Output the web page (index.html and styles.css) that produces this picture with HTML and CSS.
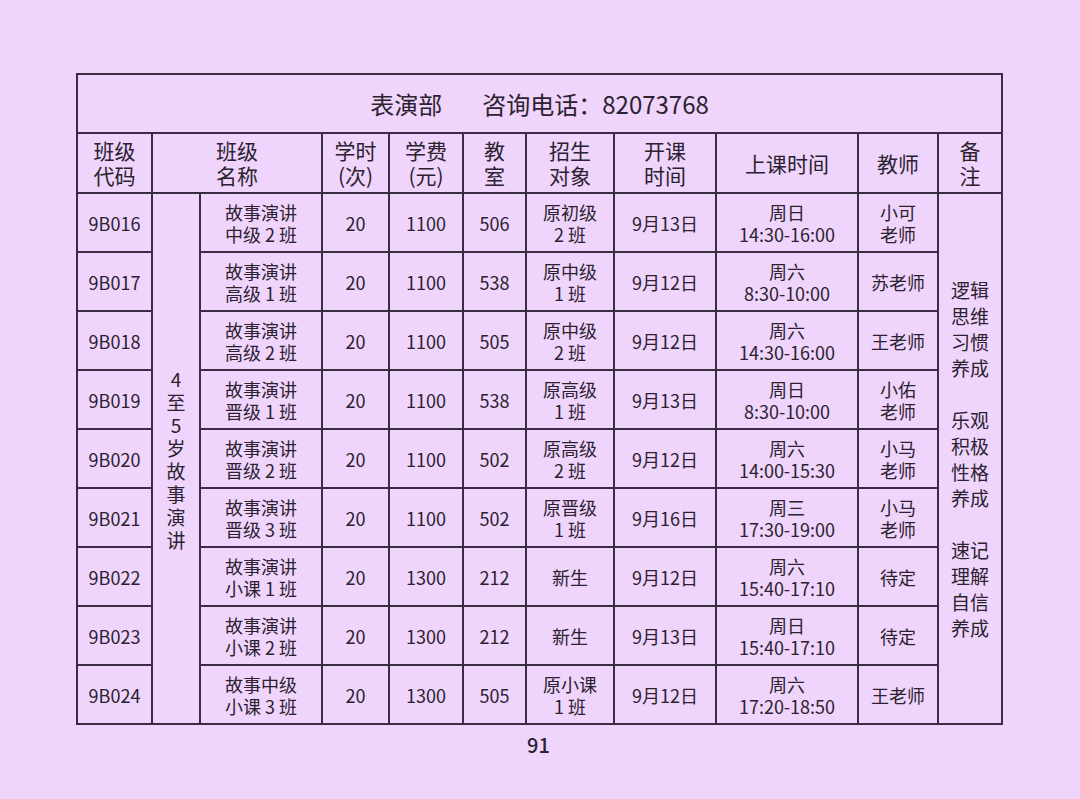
FILE: index.html
```html
<!DOCTYPE html>
<html lang="zh">
<head>
<meta charset="utf-8">
<link rel="stylesheet" href="styles.css">
</head>
<body>
<div class="page">
<table class="sched">
<colgroup>
<col class="c1"><col class="c2"><col class="c3"><col class="c4"><col class="c5"><col class="c6"><col class="c7"><col class="c8"><col class="c9"><col class="c10"><col class="c11">
</colgroup>
<tr class="title"><td colspan="11">表演部<span class="sp"></span>咨询电话：82073768</td></tr>
<tr class="head">
<td>班级<br>代码</td>
<td colspan="2">班级<br>名称</td>
<td>学时<br>(次)</td>
<td>学费<br>(元)</td>
<td>教<br>室</td>
<td>招生<br>对象</td>
<td>开课<br>时间</td>
<td>上课时间</td>
<td>教师</td>
<td>备<br>注</td>
</tr>
<tr>
<td>9B016</td>
<td rowspan="9" class="group">4<br>至<br>5<br>岁<br>故<br>事<br>演<br>讲</td>
<td>故事演讲<br>中级 2 班</td><td>20</td><td>1100</td><td>506</td><td>原初级<br>2 班</td><td>9月13日</td><td>周日<br>14:30-16:00</td><td>小可<br>老师</td>
<td rowspan="9" class="note">逻辑<br>思维<br>习惯<br>养成<br><br>乐观<br>积极<br>性格<br>养成<br><br>速记<br>理解<br>自信<br>养成</td>
</tr>
<tr><td>9B017</td><td>故事演讲<br>高级 1 班</td><td>20</td><td>1100</td><td>538</td><td>原中级<br>1 班</td><td>9月12日</td><td>周六<br>8:30-10:00</td><td>苏老师</td></tr>
<tr><td>9B018</td><td>故事演讲<br>高级 2 班</td><td>20</td><td>1100</td><td>505</td><td>原中级<br>2 班</td><td>9月12日</td><td>周六<br>14:30-16:00</td><td>王老师</td></tr>
<tr><td>9B019</td><td>故事演讲<br>晋级 1 班</td><td>20</td><td>1100</td><td>538</td><td>原高级<br>1 班</td><td>9月13日</td><td>周日<br>8:30-10:00</td><td>小佑<br>老师</td></tr>
<tr><td>9B020</td><td>故事演讲<br>晋级 2 班</td><td>20</td><td>1100</td><td>502</td><td>原高级<br>2 班</td><td>9月12日</td><td>周六<br>14:00-15:30</td><td>小马<br>老师</td></tr>
<tr><td>9B021</td><td>故事演讲<br>晋级 3 班</td><td>20</td><td>1100</td><td>502</td><td>原晋级<br>1 班</td><td>9月16日</td><td>周三<br>17:30-19:00</td><td>小马<br>老师</td></tr>
<tr><td>9B022</td><td>故事演讲<br>小课 1 班</td><td>20</td><td>1300</td><td>212</td><td>新生</td><td>9月12日</td><td>周六<br>15:40-17:10</td><td>待定</td></tr>
<tr><td>9B023</td><td>故事演讲<br>小课 2 班</td><td>20</td><td>1300</td><td>212</td><td>新生</td><td>9月13日</td><td>周日<br>15:40-17:10</td><td>待定</td></tr>
<tr><td>9B024</td><td>故事中级<br>小课 3 班</td><td>20</td><td>1300</td><td>505</td><td>原小课<br>1 班</td><td>9月12日</td><td>周六<br>17:20-18:50</td><td>王老师</td></tr>
</table>
<div class="pagenum">91</div>
</div>
</body>
</html>
```
FILE: styles.css
```css
html, body {
  margin: 0;
  padding: 0;
  background: #efd4fb;
}
body {
  width: 1080px;
  height: 799px;
  overflow: hidden;
  font-family: "Noto Sans CJK SC", "Noto Sans", sans-serif;
  color: #2b2230;
}
.page {
  padding: 73px 0 0 76px;
}
.sched {
  border-collapse: collapse;
  table-layout: fixed;
  width: 925px;
}
.sched td {
  border: 2px solid #3a2c42;
  padding: 0;
  text-align: center;
  vertical-align: middle;
  font-size: 18px;
  line-height: 22px;
  height: 57px;
}
.c1 { width: 75px; }
.c2 { width: 48px; }
.c3 { width: 122px; }
.c4 { width: 67px; }
.c5 { width: 74px; }
.c6 { width: 63px; }
.c7 { width: 88px; }
.c8 { width: 102px; }
.c9 { width: 142px; }
.c10 { width: 80px; }
.c11 { width: 64px; }
.sched .title td {
  height: 57px;
  font-size: 24px;
  line-height: 30px;
}
.sp {
  display: inline-block;
  width: 40px;
}
.sched .head td {
  height: 58px;
  font-size: 21px;
  line-height: 25px;
}
.sched td.group {
  font-size: 19px;
  line-height: 23px;
}
.sched td.note {
  font-size: 19px;
  line-height: 26px;
}
.pagenum {
  width: 925px;
  text-align: center;
  font-size: 20px;
  font-weight: 500;
  line-height: 24px;
  margin-top: 8px;
}
```
